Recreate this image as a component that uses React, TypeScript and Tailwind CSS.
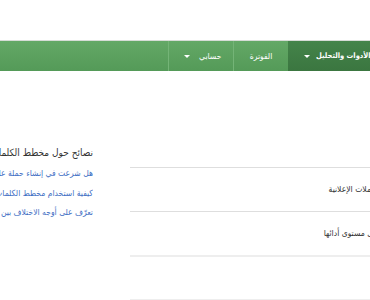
import { ReactNode } from 'react';

function Caret() {
    return <span className="inline-block w-0 h-0 border-x-[3px] border-x-transparent border-t-[3px] border-t-white" />;
}

function NavItem({ children, className }: { children: ReactNode; className: string }) {
    return <div className={`h-full flex items-center whitespace-nowrap overflow-hidden ${className}`}>{children}</div>;
}

export default function App() {
    const tips = [
        'هل شرعت في إنشاء حملة على شبكة البحث؟',
        'كيفية استخدام مخطط الكلمات الرئيسية',
        'تعرّف على أوجه الاختلاف بين الأدوات',
    ];
    const rows = ['تعرّف على الحملات الإعلانية', 'اطّلع على مستوى أدائها', '', ''];

    return (
        <div className="w-[370px] h-[300px] overflow-hidden bg-white font-['DejaVu_Sans_Condensed','DejaVu_Sans',sans-serif]">
            <div className="h-[40px]" />
            <nav className="h-[31px] flex border-t border-[#d6dcd6] bg-gradient-to-b from-[#63a866] to-[#549a58] text-white text-[8.5px]">
                <div className="flex-1" />
                <NavItem className="w-[65px] pl-[15px] gap-[9px] border-l border-[#74b477]">
                    <Caret />
                    <span dir="rtl">حسابي</span>
                </NavItem>
                <NavItem className="w-[55px] justify-center border-l border-[#74b477]">
                    <span dir="rtl">الفوترة</span>
                </NavItem>
                <NavItem className="w-[82px] pl-[16px] gap-[6px] bg-gradient-to-b from-[#44844a] to-[#3b7640]">
                    <Caret />
                    <span dir="rtl" className="text-[7.5px] font-bold">الأدوات والتحليل</span>
                </NavItem>
            </nav>
            <div className="flex">
                <div dir="rtl" className="w-[93px] shrink-0 overflow-hidden whitespace-nowrap pt-[74px]">
                    <h3 className="text-[10px] leading-[16px] text-[#333333]">نصائح حول مخطط الكلمات الرئيسية</h3>
                    <ul className="mt-[3px] text-[8.5px] leading-[19.5px] text-[#3f6fc4]">
                        {tips.map((t) => (
                            <li key={t}>{t}</li>
                        ))}
                    </ul>
                </div>
                <div className="ml-[37px] flex-1 overflow-hidden pt-[96px]">
                    {rows.map((r, i) => (
                        <div
                            key={i}
                            className={`w-[290px] h-[44px] flex items-center justify-start whitespace-nowrap ${i >= 2 ? 'border-t-2 border-[#eeeeee]' : 'border-t border-[#dedede]'}`}
                        >
                            <span dir="rtl" className={`ml-auto text-[8.5px] text-[#333333] ${i === 0 ? 'mr-[3px]' : 'mr-[22px]'}`}>
                                {r}
                            </span>
                        </div>
                    ))}
                </div>
            </div>
        </div>
    );
}
